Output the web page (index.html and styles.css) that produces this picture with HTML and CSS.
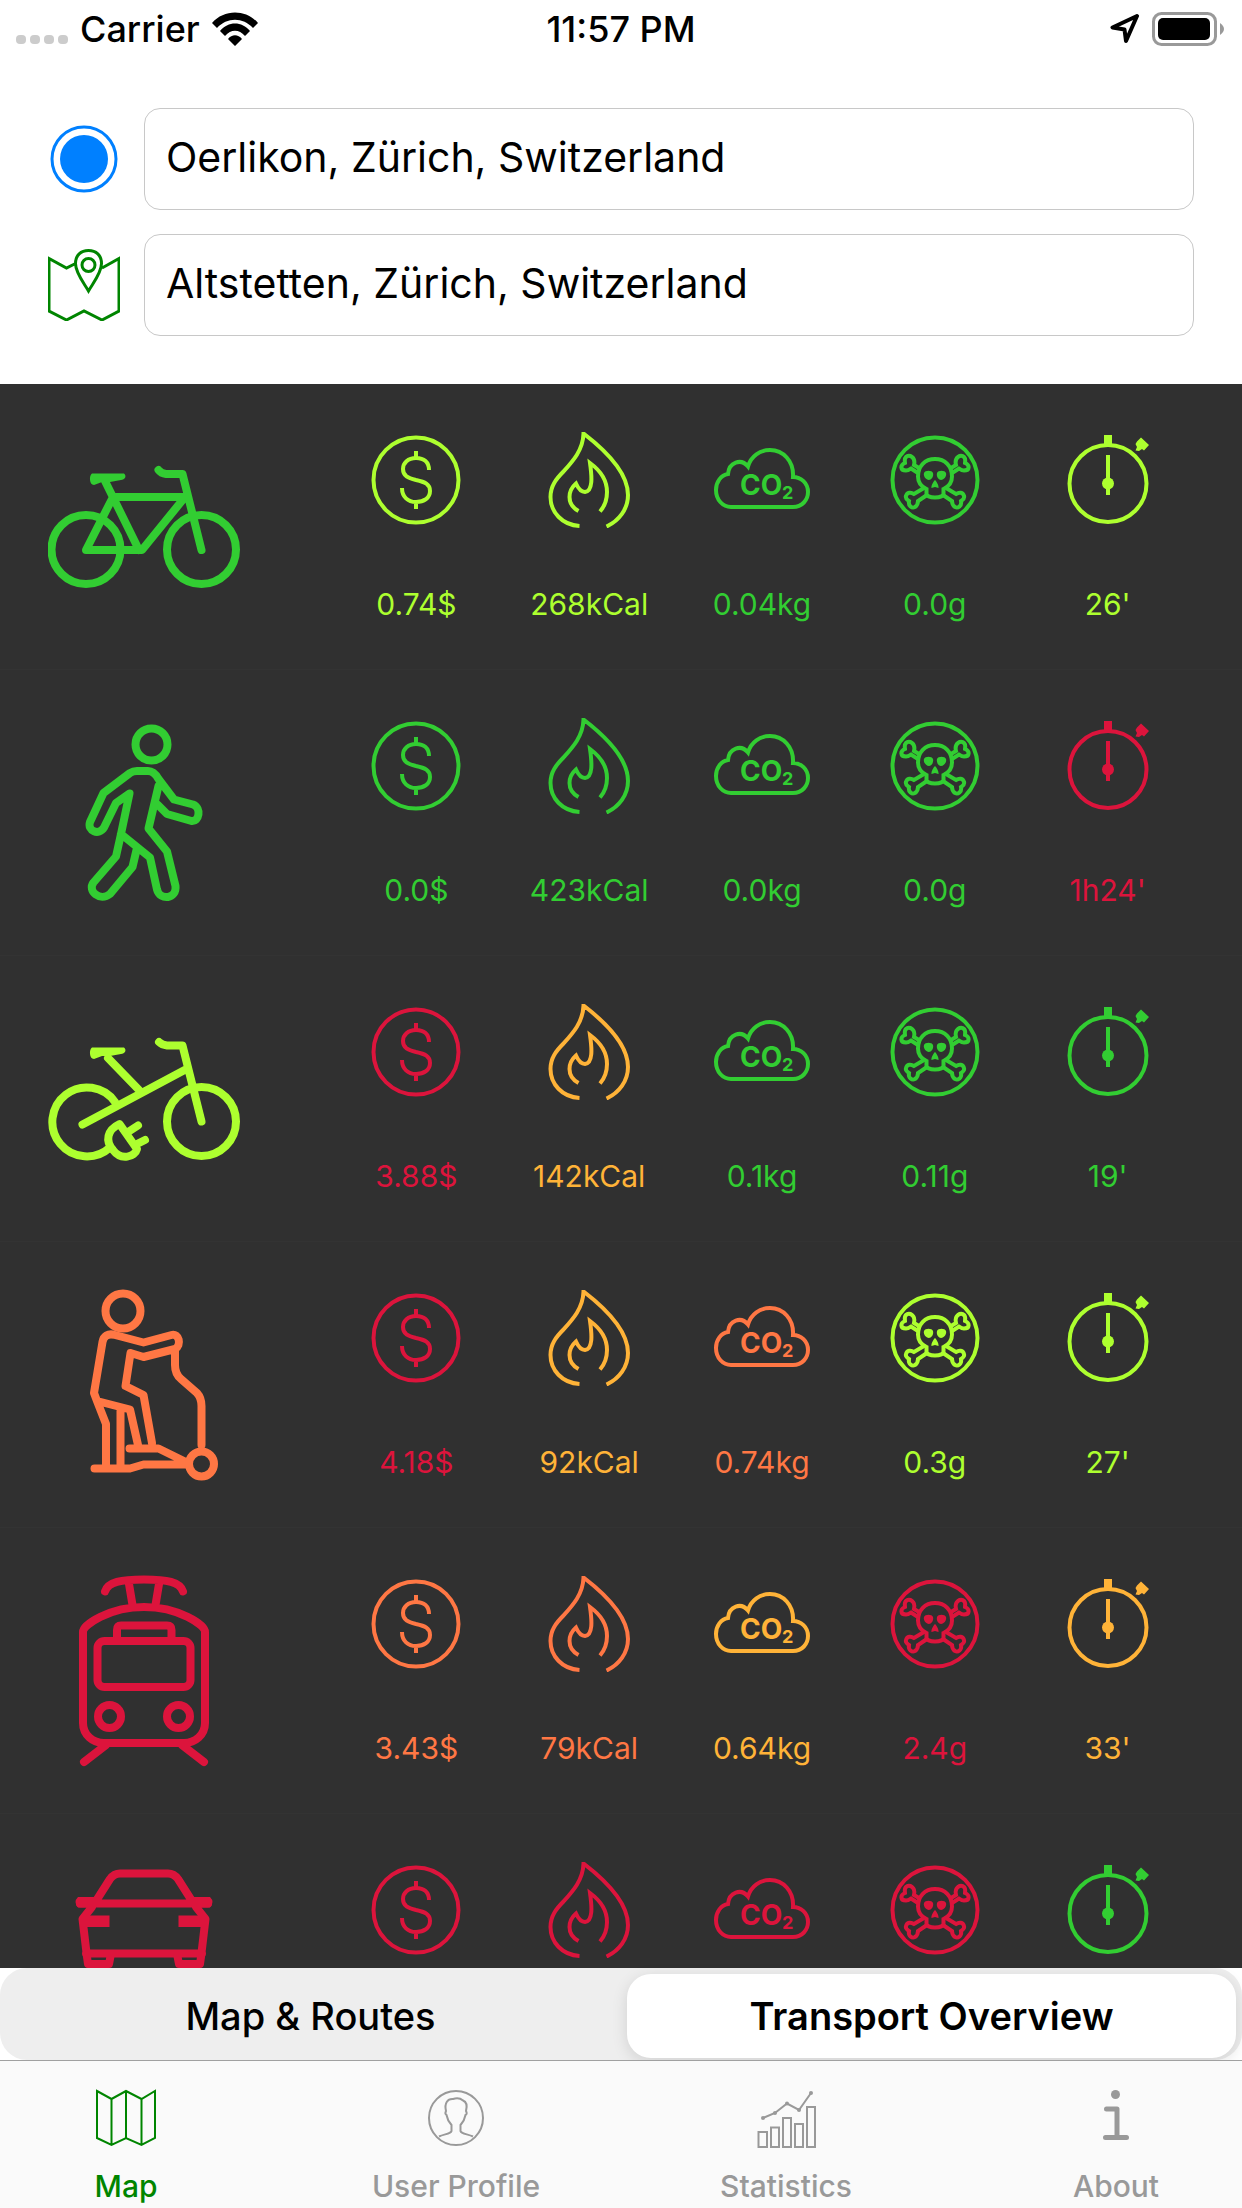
FILE: index.html
```html
<!DOCTYPE html>
<html lang="en">
<head>
<meta charset="utf-8">
<meta name="viewport" content="width=device-width, initial-scale=1">
<title>Transport Overview</title>
<link rel="stylesheet" href="styles.css">
</head>
<body>
<svg class="sprite" aria-hidden="true">
  <symbol id="cost" viewBox="0 0 96 96">
    <circle cx="48" cy="48" r="42.5"/>
    <path d="M61 38C61 30 56 26 48 26S35 31 35 37C35 44 40 46 48 48C57 50 62 52 62 59C62 66 56 70 48 70S34 65 34 56M48 19v7M48 70v7"/>
  </symbol>
  <symbol id="energy" viewBox="0 0 96 96">
    <path d="M38.500 94C21 93 9.500 80 9.500 65C9.500 54 15 47 22.500 39.500C32 29 42 18 42.500 1.500C64 18 87 40 87 63C87 77 78 89 65.500 94.500M37.500 79C32 76 28.500 71 28.500 65C28.500 60 31 55 35 51.500C37 56 40 60 44 60C52 59 51 45 49 31C60 39 66 49 66 60C66 68 63 75 59 79.500"/>
  </symbol>
  <symbol id="co2" viewBox="0 0 96 96">
    <path d="M17 75H79C88 75 94 68 94 60C94 51 87 45 79 45C80 29 69 18 56 18C46 18 37 24 34 34.500C27 26 15 30 14 42C7 43 2 50 2 58C2 68 9 75 17 75z"/>
    <text class="co" x="26" y="63">CO</text><text class="two" x="68" y="67">2</text>
  </symbol>
  <symbol id="toxic" viewBox="0 0 96 96">
    <circle cx="48" cy="48" r="42.5"/>
    <path d="M39.500 57C33 54 31 50 31 44.500C31 34 38 27 48 27S65 34 65 44.500C65 50 63 54 56.500 57V61C57 64 53 65.500 48 65.500S39 64 39.500 61z"/>
    <g id="bones"><path d="M32 36L27 33C29 25 22 22 19 25C17 27 18 30 18 31C13 33 13 38.500 19 38.500C22 38.500 23 37 24 36.500L31 41M37 56L27 62C24 60 20 60 19 64C18 67 21 68 22 69C21 74 25 76.500 28 75C31 73 31 71 31 69L40 63"/></g>
    <use href="#bones" transform="translate(96 0) scale(-1 1)"/>
    <path class="solid" d="M37 41C38 38 45 38 46 41C47 45 44 48 42 48C39 48 36 44 37 41zM50 41C51 38 58 38 59 41C60 44 57 48 54 48C52 48 49 45 50 41zM48 48C50 50 52 54 51.500 56L48 55L44.500 56C44 54 46 50 48 48z"/>
  </symbol>
  <symbol id="time" viewBox="0 0 96 96">
    <circle cx="48" cy="51.5" r="38.5"/>
    <path d="M48 23V63"/>
    <path class="solid" d="M44 3h8v11h-8zM81 5.500L89 13L84 18.500L82 17L79 19L75.500 18.500L77 15L75.500 12L77 9.500z"/>
    <circle class="solid" cx="48" cy="51.5" r="6"/>
  </symbol>
</svg>

<div class="app">
  <header class="status">
    <div class="carrier">
      <svg class="signal" viewBox="0 0 52 10" aria-hidden="true"><rect width="10" height="9" rx="4"/><rect x="14" width="10" height="9" rx="4"/><rect x="28" width="10" height="9" rx="4"/><rect x="42" width="10" height="9" rx="4"/></svg>
      <span>Carrier</span>
      <svg class="wifi" viewBox="0 0 46 34" aria-hidden="true"><path d="M0 11C12-3 34-3 46 11L41 16C31 5 15 5 5 16zM8 19C16 9 30 9 38 19L33 24C27 17 19 17 13 24zM16 27C20 22 26 22 30 27L23 34z"/></svg>
    </div>
    <time>11:57 PM</time>
    <div class="power">
      <svg class="arrow" viewBox="0 0 30 30" aria-hidden="true"><path d="M27 2L2.500 13.500L14.500 15.500L16 27z"/></svg>
      <svg class="battery" viewBox="0 0 74 34" aria-hidden="true"><rect x="1.5" y="1.500" width="62" height="31" rx="8"/><rect class="level" x="6" y="6" width="52" height="22" rx="5"/><path class="level nub" d="M68 11Q76 17 68 23z"/></svg>
    </div>
  </header>

  <form class="route">
    <label class="place">
      <svg viewBox="0 0 72 72" aria-label="From" class="from"><circle cx="36" cy="36" r="32"/><circle class="solid" cx="36" cy="36" r="24"/></svg>
      <input type="text" name="from" value="Oerlikon, Zürich, Switzerland">
    </label>
    <label class="place">
      <svg viewBox="0 0 72 72" aria-label="To" class="to"><path d="M27.500 14.500L18.500 19L1 9.500V62L18.500 71L36 62L54 71L71 62V9.500L54 19M40.500 42C36 34 27.500 24 27.500 14.500C27.500 6 33 1.500 40.500 1.500S53.500 6 53.500 14.500C53.500 24 45 34 40.500 42z"/><circle cx="40.5" cy="16" r="6.5"/></svg>
      <input type="text" name="to" value="Altstetten, Zürich, Switzerland">
    </label>
  </form>

  <main class="list">
    <section class="row">
      <svg class="mode best" viewBox="0 0 192 192" role="img" aria-label="Bicycle"><circle cx="38" cy="118.5" r="34.5"/><circle cx="153.5" cy="118.5" r="34.5"/><path d="M57 50L91 119M65 66H137L94 119H38L65 66M153.500 119L134.500 43H118Q113 42.500 110.500 39"/><path class="solid" d="M44 42.500H76C79 45 77 49 73 49L62 51H54L46 54C41 54 41 44 44 42.500z"/></svg>
      <ul class="stats">
        <li class="good"><svg><use href="#cost"/></svg>0.74$</li>
        <li class="good"><svg><use href="#energy"/></svg>268kCal</li>
        <li class="best"><svg><use href="#co2"/></svg>0.04kg</li>
        <li class="best"><svg><use href="#toxic"/></svg>0.0g</li>
        <li class="good"><svg><use href="#time"/></svg>26'</li>
      </ul>
    </section>
    <section class="row">
      <svg class="mode best" viewBox="0 0 192 192" role="img" aria-label="Walking"><circle cx="103.5" cy="27.5" r="16"/><path d="M110.500 69L100.500 111.500L119 134.500L127.500 169C129 182 112 184 109 172.500L102 140.500L73 117M88.500 133L84.500 150L62 177C52 185 39 174 45.500 165.500L68 139.500L73 117L81.500 76.500L68 86L56 110.500C51 119 39 114 42 105L55.500 76L82 56Q85 54 89 54H100Q106 54 110.500 62L126 82.500L145 87.500C154 91 151 105 143.500 104L119 97L110 88"/></svg>
      <ul class="stats">
        <li class="best"><svg><use href="#cost"/></svg>0.0$</li>
        <li class="best"><svg><use href="#energy"/></svg>423kCal</li>
        <li class="best"><svg><use href="#co2"/></svg>0.0kg</li>
        <li class="best"><svg><use href="#toxic"/></svg>0.0g</li>
        <li class="worst"><svg><use href="#time"/></svg>1h24'</li>
      </ul>
    </section>
    <section class="row">
      <svg class="mode good" viewBox="0 0 192 192" role="img" aria-label="E-bike"><path d="M67 99A34.500 34.500 0 1 0 62 144.500"/><circle cx="153.5" cy="118.5" r="34.5"/><path d="M34.500 121.500L138.500 66M60 55L91 87M153.500 118.500L134.500 42.500H119Q114 42 111 39M80 129L90 122.500M87 142L97 137M71.500 121C59 127 57 138 65 147C73 158 87 154 89 146z"/><path class="solid" d="M44 44.500H76C79 47 77 51 73 51L62 53H54L46 56C41 56 41 46 44 44.500z"/></svg>
      <ul class="stats">
        <li class="worst"><svg><use href="#cost"/></svg>3.88$</li>
        <li class="fair"><svg><use href="#energy"/></svg>142kCal</li>
        <li class="best"><svg><use href="#co2"/></svg>0.1kg</li>
        <li class="best"><svg><use href="#toxic"/></svg>0.11g</li>
        <li class="best"><svg><use href="#time"/></svg>19'</li>
      </ul>
    </section>
    <section class="row">
      <svg class="mode poor" viewBox="0 0 192 192" role="img" aria-label="E-scooter"><circle cx="75" cy="22" r="17.5"/><path d="M104 154L95.500 106L77.500 97L82.500 64L95.500 68L127 60C134 56 131 44 123.500 46L95.500 53.500L67 46C60 44 55.500 47 54.500 53L46 104L49 112L82 120.500L90 156M49 112L58 135V176M72.500 121V176M46.500 179.500H82L95.500 175.500H140M81.500 159.500H110.500L140 174M153.500 156V117Q153.500 109 149 104L133 90Q127 85 127 76V62"/><circle cx="153.5" cy="175" r="12.5"/></svg>
      <ul class="stats">
        <li class="worst"><svg><use href="#cost"/></svg>4.18$</li>
        <li class="fair"><svg><use href="#energy"/></svg>92kCal</li>
        <li class="poor"><svg><use href="#co2"/></svg>0.74kg</li>
        <li class="good"><svg><use href="#toxic"/></svg>0.3g</li>
        <li class="good"><svg><use href="#time"/></svg>27'</li>
      </ul>
    </section>
    <section class="row">
      <svg class="mode worst" viewBox="0 0 192 192" role="img" aria-label="Tram"><path d="M57 16.500C60 7 73 4.500 96 4.500S132 7 135 16.500M80.500 6L84.500 30M111.500 6L107.500 30M35 57V148C35 160 45 168 56 168H136C147 168 157 160 157 148V57C157 50 131 32 96 32S35 50 35 57zM69 66V55Q69 50.500 73 50.500H119Q123.500 50.500 123.500 55V66M58 170L36 187M134 170L156 187"/><rect x="49.5" y="66" width="93" height="46" rx="7"/><circle cx="61.5" cy="141.5" r="11.5"/><circle cx="130.5" cy="141.5" r="11.5"/></svg>
      <ul class="stats">
        <li class="poor"><svg><use href="#cost"/></svg>3.43$</li>
        <li class="poor"><svg><use href="#energy"/></svg>79kCal</li>
        <li class="fair"><svg><use href="#co2"/></svg>0.64kg</li>
        <li class="worst"><svg><use href="#toxic"/></svg>2.4g</li>
        <li class="fair"><svg><use href="#time"/></svg>33'</li>
      </ul>
    </section>
    <section class="row">
      <svg class="mode worst" viewBox="0 0 192 192" role="img" aria-label="Car"><path d="M48 40L62 18Q66 12.500 72 12.500H120Q126 12.500 130 18L144 40M32 42.500H160M44 46L34.500 58L39 96L40 103H61L63 93M148 46L157.500 58L153 96L152 103H131L129 93M38 92.500H154"/><path class="solid" d="M30 36H47V46.500H30Q25 41 30 36zM162 36H145V46.500H162Q167 41 162 36zM35 54.500H61.500V66H35zM157 54.500H130.500V66H157z"/></svg>
      <ul class="stats">
        <li class="worst"><svg><use href="#cost"/></svg></li>
        <li class="worst"><svg><use href="#energy"/></svg></li>
        <li class="worst"><svg><use href="#co2"/></svg></li>
        <li class="worst"><svg><use href="#toxic"/></svg></li>
        <li class="best"><svg><use href="#time"/></svg></li>
      </ul>
    </section>
  </main>

  <div class="segments">
    <button type="button">Map &amp; Routes</button>
    <button type="button" class="selected" aria-pressed="true">Transport Overview</button>
  </div>

  <nav class="tabs">
    <a href="#map" class="current"><svg viewBox="0 0 60 60" aria-hidden="true"><path d="M1 3L15.500 11L30 3L45.500 11L59 3V50L45.500 57L30 50L15.500 57L1 50zM15.500 11V57M30 3V50M45.500 11V57"/></svg>Map</a>
    <a href="#profile"><svg viewBox="0 0 60 60" aria-hidden="true"><circle cx="30" cy="30" r="27"/><path d="M13 48.500C18 46 25 46 25.500 43V37C22 33 21 30 20.500 27Q18.500 26 20 23C18 15 22 10.500 27 11Q33 9 37 12.500C41 14 41 19 40 23Q41.500 26 39.500 27C39 30 38 33 34.500 37V43C35 46 42 46 47 48.500"/></svg>User Profile</a>
    <a href="#statistics"><svg viewBox="0 0 60 60" aria-hidden="true"><path d="M2.500 44H11V59H2.500zM15 39.500H23V59H15zM27 30H35V59H27zM39 36H47V59H39zM51 19H59V59H51zM7 30L19 25L31 15.500L43 22L55 5"/><g class="solid"><circle cx="7" cy="30" r="2"/><circle cx="19" cy="25" r="2"/><circle cx="31" cy="15.5" r="2"/><circle cx="43" cy="22" r="2"/><circle cx="55" cy="5" r="2"/></g></svg>Statistics</a>
    <a href="#about"><svg viewBox="0 0 60 60" aria-hidden="true"><circle class="solid dot" cx="29.5" cy="6.5" r="4.5"/><path class="thick" d="M20.500 21H31V49.500M19.500 49.500H40.500"/></svg>About</a>
  </nav>
</div>
</body>
</html>
```

FILE: styles.css
```css
* { box-sizing: border-box; }
body {
  margin: 0;
  background: #fff;
  color: #000;
  font-family: Inter, "Liberation Sans", sans-serif;
}
.sprite { display: none; }
.app { display: flex; flex-direction: column; height: 100vh; }

/* status bar */
.status {
  display: grid;
  grid-template-columns: 1fr auto 1fr;
  align-items: center;
  height: 58px;
  padding: 0 16px;
  font-size: 36px;
  font-weight: 500;
}
.carrier { display: flex; align-items: center; gap: 12px; }
.signal { align-self: flex-end; width: 52px; height: 10px; margin-bottom: 6px; fill: #ccc; }
.wifi { width: 46px; height: 34px; }
.power { display: flex; align-items: center; justify-content: flex-end; gap: 12px; }
.arrow { width: 30px; height: 30px; fill: none; stroke: #000; stroke-width: 4; stroke-linejoin: round; }
.battery { width: 74px; height: 34px; fill: none; stroke: #999; stroke-width: 3; }
.battery .level { fill: #000; stroke: none; }
.battery .nub { fill: #999; }

/* route form */
.route { display: flex; flex-direction: column; gap: 24px; padding: 50px 48px 48px; }
.place { display: flex; align-items: center; gap: 24px; }
.place svg { flex: none; width: 72px; height: 72px; fill: none; stroke: currentColor; }
.from { color: #0080ff; stroke-width: 3; }
.to { color: #008500; stroke-width: 3; }
.place .solid { fill: currentColor; stroke: none; }
.place input {
  flex: 1;
  min-width: 0;
  height: 102px;
  padding: 0 21px 4px;
  border: 1px solid #c8c8c8;
  border-radius: 16px;
  background: #fff;
  color: #000;
  font: inherit;
  font-size: 41px;
}

/* comparison list */
.list { flex: 1; min-height: 0; overflow: hidden; background: #303030; }
.row {
  display: flex;
  align-items: center;
  gap: 90px;
  height: 286px;
  padding: 0 48px;
  border-bottom: 1px solid #333;
}
.mode {
  flex: none;
  width: 192px;
  height: 192px;
  fill: none;
  stroke: currentColor;
  stroke-width: 8;
  stroke-linecap: round;
  stroke-linejoin: round;
}
.solid { fill: currentColor; stroke: none; }
.stats {
  flex: 1;
  display: grid;
  grid-template-columns: repeat(5, 1fr);
  align-self: flex-start;
  margin: 0;
  padding: 48px 0 0;
  list-style: none;
}
.stats li {
  display: flex;
  flex-direction: column;
  align-items: center;
  gap: 58px;
  font-size: 30px;
  line-height: 36px;
}
.stats svg { width: 96px; height: 96px; fill: none; stroke: currentColor; stroke-width: 4; }
.co, .two { fill: currentColor; stroke: none; font-weight: 700; }
.co { font-size: 28px; }
.two { font-size: 18px; }
.best { color: #32cd32; }
.good { color: #adff2f; }
.fair { color: #ffb338; }
.poor { color: #ff7744; }
.worst { color: #dc143c; }

/* segmented control */
.segments {
  display: flex;
  gap: 12px;
  height: 92px;
  padding: 6px 6px 2px;
  border-radius: 27px;
  background: #eee;
}
.segments button {
  flex: 1;
  padding: 0;
  border: 0;
  border-radius: 24px;
  background: none;
  color: #000;
  font: inherit;
  font-size: 38px;
  font-weight: 500;
}
.segments .selected { background: #fff; font-weight: 600; box-shadow: 0 4px 16px rgba(0, 0, 0, .12); }

/* tab bar */
.tabs {
  position: relative;
  display: flex;
  justify-content: space-between;
  height: 148px;
  padding: 27px 36px 0;
  border-top: 1px solid #a0a0a0;
  background: #fafafa;
}
.tabs a {
  display: flex;
  flex-direction: column;
  align-items: center;
  gap: 20px;
  width: 180px;
  color: #999;
  font-size: 30px;
  font-weight: 500;
  line-height: 36px;
  text-decoration: none;
  white-space: nowrap;
}
.tabs .current { color: #008500; }
.tabs svg { width: 60px; height: 60px; fill: none; stroke: currentColor; stroke-width: 2; }
.tabs .solid { fill: currentColor; }
.tabs .dot { stroke: none; }
.tabs .thick { stroke-width: 5; stroke-linecap: round; stroke-linejoin: round; }
```
